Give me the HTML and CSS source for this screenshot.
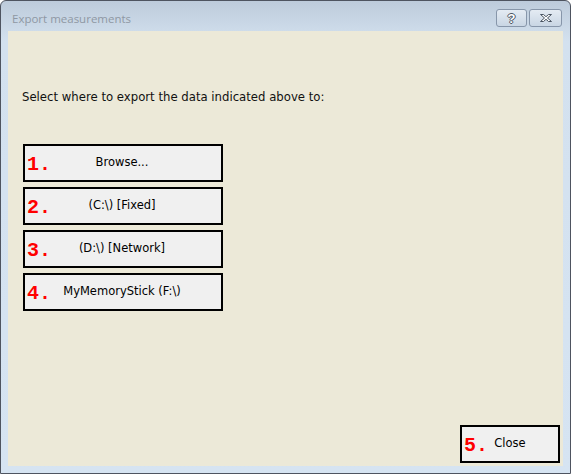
FILE: index.html
```html
<!doctype html>
<html lang="en">
<head>
  <meta charset="UTF-8">
  <title>Export measurements</title>
  <link rel="stylesheet" href="styles.css">
</head>
<body>

  <div class="window">
    <div class="titlebar">
      <span class="title">Export measurements</span>
      <div class="caption-buttons">
        <span class="cap-btn help">?</span>
        <span class="cap-btn close">
          <svg width="16" height="10" viewBox="0 0 16 10">
            <path d="M2.5 1.5h3l2.5 2.2 2.5-2.2h3l-4 3.5 4 3.5h-3l-2.5-2.2-2.5 2.2h-3l4-3.5z" fill="#fff" stroke="#4a5563" stroke-width="1"/>
          </svg>
        </span>
      </div>
    </div>

    <div class="client">
      <p class="prompt">Select where to export the data indicated above to:</p>

      <div class="targets">
        <button class="target"><span class="num">1.</span><span class="label">Browse...</span></button>
        <button class="target"><span class="num">2.</span><span class="label">(C:\) [Fixed]</span></button>
        <button class="target"><span class="num">3.</span><span class="label">(D:\) [Network]</span></button>
        <button class="target"><span class="num">4.</span><span class="label">MyMemoryStick (F:\)</span></button>
      </div>

      <button class="target close-btn"><span class="num">5.</span><span class="label">Close</span></button>
    </div>
  </div>

</body>
</html>
```

FILE: styles.css
```css
body {
  margin: 0;
  background: #fff;
  font-family: 'DejaVu Sans', Verdana, sans-serif;
}
.window {
  width: 571px;
  height: 474px;
  box-sizing: border-box;
  border: 1px solid #4e5460;
  border-radius: 6px 6px 0 0;
  background: linear-gradient(#bdcbdb, #d3e1ef 40px, #d6e4f2);
  display: flex;
  flex-direction: column;
}
.titlebar {
  height: 30px;
  display: flex;
  align-items: flex-start;
  justify-content: space-between;
  padding: 0 8px 0 11px;
}
.title {
  font-family: 'Open Sans', sans-serif;
  font-size: 11.5px;
  color: #8f98a3;
  margin-top: 10px;
}
.caption-buttons {
  display: flex;
  gap: 2px;
  margin-top: 8px;
}
.cap-btn {
  width: 31px;
  height: 18px;
  box-sizing: border-box;
  border: 1px solid #8796aa;
  border-radius: 3px;
  background: linear-gradient(#e4ebf3, #c9d6e4);
  display: flex;
  align-items: center;
  justify-content: center;
}
.help {
  font-family: 'Liberation Sans', sans-serif;
  font-weight: bold;
  font-size: 13px;
  color: #fff;
  text-shadow: 1px 0 #4a5563, -1px 0 #4a5563, 0 1px #4a5563, 0 -1px #4a5563;
}
.close {
  width: 33px;
}

.client {
  flex: 1;
  margin: 0 7px 7px 7px;
  background: #ece9d8;
  display: flex;
  flex-direction: column;
}
.prompt {
  margin: 59px 0 0 14px;
  font-size: 11.7px;
  color: #111;
}
.targets {
  display: flex;
  flex-direction: column;
  gap: 5px;
  margin: 40px 0 0 15px;
}
.target {
  width: 200px;
  height: 38px;
  box-sizing: border-box;
  border: 2px solid #000;
  background: #f0f0f0;
  padding: 0 0 0 2px;
  display: grid;
  align-items: center;
  font-family: 'DejaVu Sans', Verdana, sans-serif;
  font-size: 11.5px;
  color: #000;
}
.target .num,
.target .label {
  grid-area: 1 / 1;
}
.num {
  justify-self: start;
  font-family: 'Liberation Mono', 'Courier New', monospace;
  font-weight: bold;
  font-size: 20px;
  color: #ff0000;
  margin-top: 3px;
}
.label {
  justify-self: center;
  margin: -2px 0 0 -4px;
}
.close-btn {
  width: 100px;
  margin: auto 3px 3px auto;
}
.close-btn .label {
  margin-left: -2px;
}
```
